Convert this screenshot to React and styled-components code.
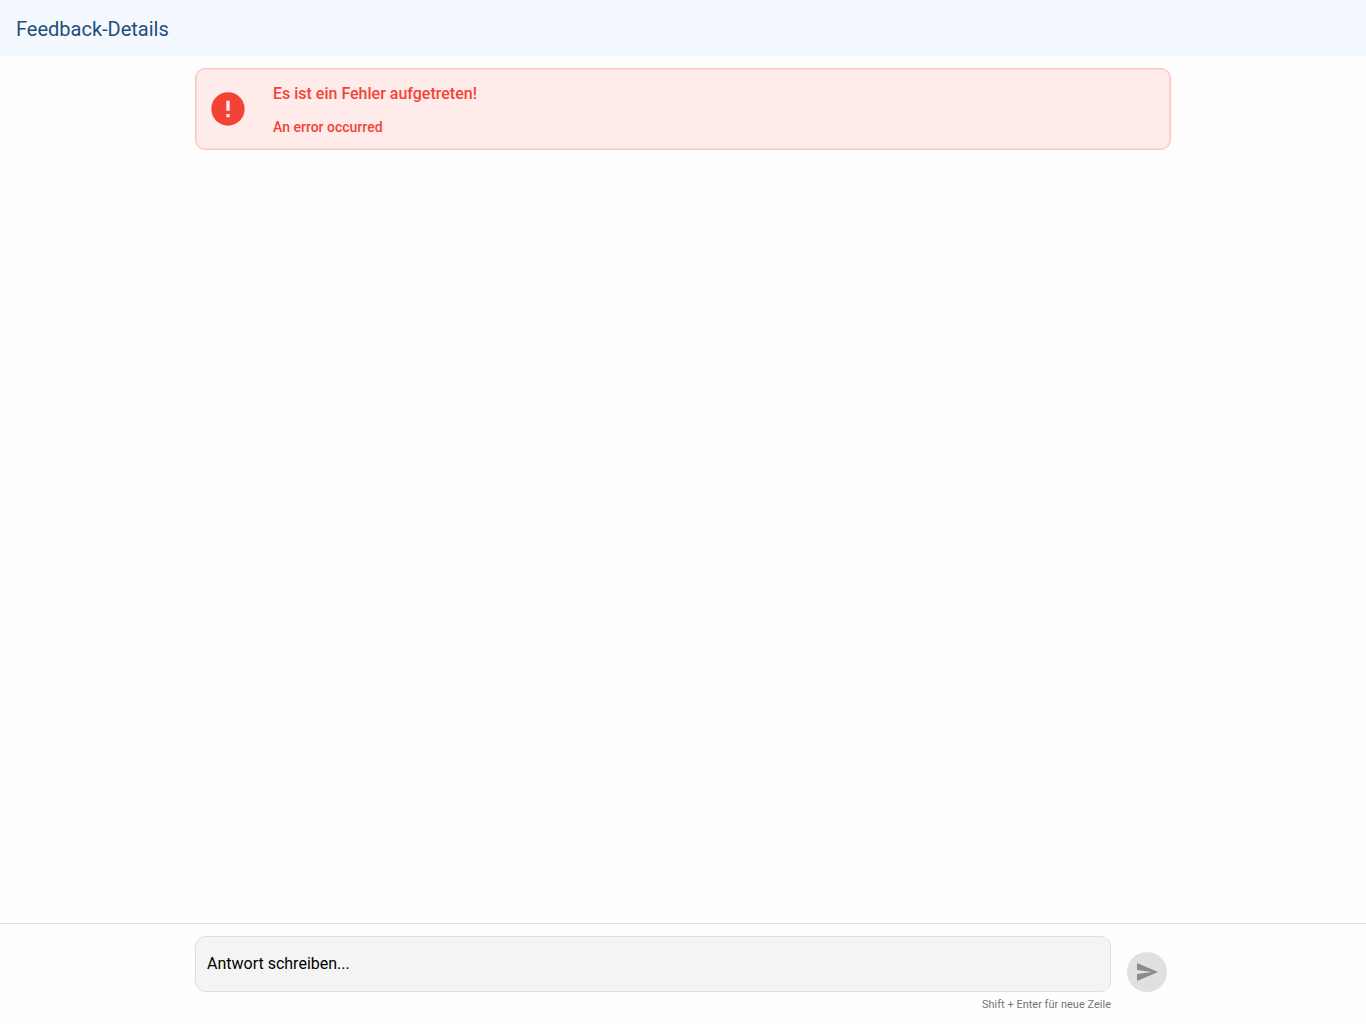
import React, { useState } from "react";
import styled, { createGlobalStyle } from "styled-components";

const GlobalStyle = createGlobalStyle`
  *, *::before, *::after { box-sizing: border-box; }
  body { margin: 0; background: #fefefe; font-family: Roboto, sans-serif; }
`;

const Page = styled.div`
  min-height: 100vh;
  display: flex;
  flex-direction: column;
`;

const Toolbar = styled.header`
  display: flex;
  align-items: center;
  height: 56px;
  padding: 2px 16px 0;
  background: #f4f9ff;
`;

const Title = styled.h1`
  margin: 0;
  font-size: 20px;
  line-height: 24px;
  font-weight: 400;
  color: #1f4e79;
`;

const Content = styled.main`
  flex: 1;
  padding: 12px 16px;
`;

const Container = styled.div`
  width: 100%;
  max-width: 976px;
  margin: 0 auto;
`;

const Alert = styled(Container)`
  display: flex;
  align-items: center;
  gap: 24px;
  padding: 14px 12px;
  border: 1px solid #fcc4c0;
  border-radius: 10px;
  box-shadow: inset 0 0 0 1px #fdd8d5;
  background: #feebea;
  color: #f44336;
`;

const AlertIcon = styled.svg`
  width: 40px;
  height: 40px;
  flex: none;
  fill: currentColor;
`;

const AlertBody = styled.div`
  display: grid;
  gap: 14px;
  padding-left: 1px;
`;

const AlertTitle = styled.h2`
  margin: 0;
  font-size: 16px;
  line-height: 22px;
  font-weight: 500;
`;

const AlertText = styled.p`
  margin: 0;
  font-size: 14px;
  line-height: 16px;
  font-weight: 500;
`;

const Footer = styled.footer`
  padding: 12px 16px 11px;
  border-top: 1px solid #e0e0e0;
`;

const Form = styled.form`
  display: grid;
  grid-template-columns: 1fr 40px;
  column-gap: 16px;
  row-gap: 5px;
  align-items: end;
  padding-right: 4px;
`;

const Field = styled.textarea`
  display: block;
  width: 100%;
  height: 56px;
  padding: 15px 11px;
  border: 1px solid #e0e0e0;
  border-radius: 10px;
  background: #f4f4f4;
  font: 400 16px/24px Roboto, sans-serif;
  color: #000;
  resize: none;
  overflow: hidden;
  &::placeholder { color: #000; opacity: 1; }
`;

const SendButton = styled.button`
  display: flex;
  align-items: center;
  justify-content: center;
  width: 40px;
  height: 40px;
  padding: 0;
  border: 0;
  border-radius: 50%;
  background: #e0e0e0;
  color: #8b8b8b;
  svg { width: 24px; height: 24px; fill: currentColor; }
`;

const Hint = styled.small`
  text-align: right;
  font-size: 11px;
  line-height: 16px;
  color: #757575;
`;

export default function App() {
  const [reply, setReply] = useState("");
  return (
    <Page>
      <GlobalStyle />
      <Toolbar><Title>Feedback-Details</Title></Toolbar>
      <Content>
        <Alert role="alert">
          <AlertIcon viewBox="0 0 24 24" aria-hidden="true">
            <path d="M12 2C6.48 2 2 6.48 2 12s4.48 10 10 10 10-4.480 10-10S17.520 2 12 2zm1 15h-2v-2h2v2zm0-4h-2V7h2v6z" />
          </AlertIcon>
          <AlertBody>
            <AlertTitle>Es ist ein Fehler aufgetreten!</AlertTitle>
            <AlertText>An error occurred</AlertText>
          </AlertBody>
        </Alert>
      </Content>
      <Footer>
        <Container>
          <Form onSubmit={(e) => e.preventDefault()}>
            <Field
              aria-label="Antwort schreiben"
              aria-describedby="reply-hint"
              placeholder="Antwort schreiben..."
              rows={1}
              value={reply}
              onChange={(e) => setReply(e.target.value)}
            />
            <SendButton type="submit" aria-label="Senden" disabled={!reply.trim()}>
              <svg viewBox="0 0 24 24" aria-hidden="true"><path d="M2.010 21 23 12 2.010 3 2 10l15 2-15 2z" /></svg>
            </SendButton>
            <Hint id="reply-hint">Shift + Enter für neue Zeile</Hint>
          </Form>
        </Container>
      </Footer>
    </Page>
  );
}
